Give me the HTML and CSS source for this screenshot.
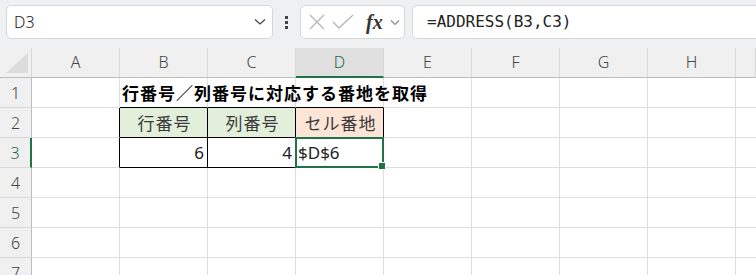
FILE: index.html
```html
<!DOCTYPE html>
<html lang="ja">
<head>
    <meta charset="UTF-8">
    <title>ADDRESS</title>
    <link rel="stylesheet" href="styles.css">
</head>
<body>
    <div class="toolbar">
        <div class="namebox">
            <span>D3</span>
            <svg class="chev" width="12" height="8" viewBox="0 0 12 8"><path d="M1 1.5 L6 6 L11 1.5" fill="none" stroke="#444" stroke-width="1.3"/></svg>
        </div>
        <div class="dots"><i></i><i></i><i></i></div>
        <div class="fxbox">
            <svg width="18" height="18" viewBox="0 0 18 18"><path d="M2 2 L16 16 M16 2 L2 16" stroke="#b8b8b8" stroke-width="1.4"/></svg>
            <svg width="22" height="18" viewBox="0 0 22 18"><path d="M1 9 L7 15 L21 2" fill="none" stroke="#b8b8b8" stroke-width="1.4"/></svg>
            <span class="fx">fx</span>
            <svg width="10" height="7" viewBox="0 0 10 7"><path d="M1 1.5 L5 5.5 L9 1.5" fill="none" stroke="#888" stroke-width="1.1"/></svg>
        </div>
        <div class="formula">=ADDRESS(B3,C3)</div>
    </div>

    <div class="sheet">
        <div class="corner"><div class="tri"></div></div>
        <div class="colhead">A</div>
        <div class="colhead">B</div>
        <div class="colhead">C</div>
        <div class="colhead sel">D</div>
        <div class="colhead">E</div>
        <div class="colhead">F</div>
        <div class="colhead">G</div>
        <div class="colhead">H</div>
        <div class="colhead last"></div>

        <div class="rowhead">1</div>
        <div class="cell"></div>
        <div class="cell title bk-b"><span>行番号／列番号に対応する番地を取得</span></div>
        <div class="cell bk-b"></div>
        <div class="cell bk-b"></div>
        <div class="cell"></div>
        <div class="cell"></div>
        <div class="cell"></div>
        <div class="cell"></div>
        <div class="cell last"></div>

        <div class="rowhead">2</div>
        <div class="cell bk-r"></div>
        <div class="cell green bk-r bk-b center">行番号</div>
        <div class="cell green bk-r bk-b center">列番号</div>
        <div class="cell orange bk-r bk-b center">セル番地</div>
        <div class="cell"></div>
        <div class="cell"></div>
        <div class="cell"></div>
        <div class="cell"></div>
        <div class="cell last"></div>

        <div class="rowhead sel">3</div>
        <div class="cell bk-r"></div>
        <div class="cell bk-r bk-b right num">6</div>
        <div class="cell bk-r bk-b right num">4</div>
        <div class="cell bk-r bk-b active num">$D$6</div>
        <div class="cell"></div>
        <div class="cell"></div>
        <div class="cell"></div>
        <div class="cell"></div>
        <div class="cell last"></div>

        <div class="rowhead">4</div>
        <div class="cell"></div><div class="cell"></div><div class="cell"></div><div class="cell"></div>
        <div class="cell"></div><div class="cell"></div><div class="cell"></div><div class="cell"></div><div class="cell last"></div>

        <div class="rowhead">5</div>
        <div class="cell"></div><div class="cell"></div><div class="cell"></div><div class="cell"></div>
        <div class="cell"></div><div class="cell"></div><div class="cell"></div><div class="cell"></div><div class="cell last"></div>

        <div class="rowhead">6</div>
        <div class="cell"></div><div class="cell"></div><div class="cell"></div><div class="cell"></div>
        <div class="cell"></div><div class="cell"></div><div class="cell"></div><div class="cell"></div><div class="cell last"></div>

        <div class="rowhead">7</div>
        <div class="cell"></div><div class="cell"></div><div class="cell"></div><div class="cell"></div>
        <div class="cell"></div><div class="cell"></div><div class="cell"></div><div class="cell"></div><div class="cell last"></div>
    </div>
</body>
</html>
```

FILE: styles.css
```css
* {
    box-sizing: border-box;
}
body {
    margin: 0;
    width: 756px;
    height: 275px;
    overflow: hidden;
    background: #fff;
    font-family: "Noto Sans CJK JP", "Noto Sans", sans-serif;
}
.toolbar {
    height: 48px;
    background: #eef0f2;
    display: flex;
    align-items: flex-start;
    padding: 5px 0 0 6px;
}
.namebox {
    width: 267px;
    height: 34px;
    background: #fff;
    border: 1px solid #d6d6d6;
    border-radius: 5px;
    display: flex;
    align-items: center;
    justify-content: space-between;
    padding: 0 6px 0 7px;
    font-family: "Noto Sans", sans-serif;
    font-weight: 300;
    font-size: 16px;
    color: #222;
}
.dots {
    width: 27px;
    height: 34px;
    display: flex;
    flex-direction: column;
    align-items: center;
    justify-content: center;
    gap: 2px;
}
.dots i {
    width: 3px;
    height: 3px;
    background: #444;
}
.fxbox {
    width: 105px;
    height: 34px;
    background: #fff;
    border: 1px solid #d6d6d6;
    border-radius: 5px;
    display: flex;
    align-items: center;
    padding: 0 4px 0 7px;
    gap: 6px;
}
.fx {
    font-family: "Liberation Serif", serif;
    font-style: italic;
    font-weight: bold;
    font-size: 20px;
    color: #333;
    margin-left: 6px;
    margin-right: 1px;
}
.formula {
    flex: 1;
    height: 34px;
    margin-left: 7px;
    background: #fff;
    border: 1px solid #d6d6d6;
    border-right: none;
    border-radius: 5px 0 0 5px;
    padding-left: 14px;
    font-family: "DejaVu Sans Mono", monospace;
    font-size: 16px;
    line-height: 32px;
    color: #222;
}
.sheet {
    display: grid;
    grid-template-columns: 32px repeat(8, 88px) 1fr;
    grid-auto-rows: 30px;
}
.corner, .colhead {
    background: #f0f0f0;
    border-bottom: 1px solid #bcbcbc;
    border-right: 1px solid #d8d8d8;
}
.corner {
    display: flex;
    align-items: flex-end;
    justify-content: flex-end;
    padding: 0 3px 4px 0;
}
.tri {
    width: 22px;
    height: 20px;
    background: #dcdcdc;
    clip-path: polygon(100% 0, 100% 100%, 0 100%);
}
.colhead {
    font-family: "Noto Sans", sans-serif;
    font-weight: 300;
    font-size: 16px;
    color: #444;
    display: flex;
    align-items: center;
    justify-content: center;
    padding-bottom: 1px;
}
.colhead.sel {
    background: #e0e0e0;
    color: #1e6b40;
    border-bottom: 2px solid #217346;
}
.rowhead {
    background: #f0f0f0;
    border-right: 1px solid #bcbcbc;
    border-bottom: 1px solid #d8d8d8;
    font-family: "Noto Sans", sans-serif;
    font-weight: 300;
    font-size: 16px;
    color: #444;
    display: flex;
    align-items: center;
    justify-content: center;
}
.rowhead.sel {
    color: #1e6b40;
    border-right: 2px solid #217346;
}
.cell {
    border-right: 1px solid #dedede;
    border-bottom: 1px solid #dedede;
    font-size: 16px;
    color: #222;
    display: flex;
    align-items: center;
    padding: 0 3px;
    white-space: nowrap;
}
.cell.last {
    border-right: none;
}
.title {
    font-size: 17px;
    letter-spacing: 1px;
    font-weight: bold;
    color: #000;
    padding-left: 2px;
    position: relative;
    z-index: 1;
}
.bk-r {
    border-right-color: #000;
}
.bk-b {
    border-bottom-color: #000;
}
.center {
    justify-content: center;
    color: #3a3a3a;
    font-size: 17px;
    letter-spacing: 1px;
    padding-left: 5px;
}
.num {
    font-size: 17px;
    font-family: "Noto Sans", sans-serif;
}
.right {
    justify-content: flex-end;
}
.green {
    background: #e2efda;
}
.orange {
    background: #fce4d6;
}
.active {
    position: relative;
    padding-left: 2px;
}
.active::after {
    content: "";
    position: absolute;
    left: -1px;
    top: -1px;
    right: -1px;
    bottom: -1px;
    border: 2px solid #217346;
}
.active::before {
    content: "";
    position: absolute;
    right: -3px;
    bottom: -3px;
    width: 6px;
    height: 6px;
    background: #217346;
    border: 1px solid #fff;
    z-index: 2;
}
```
